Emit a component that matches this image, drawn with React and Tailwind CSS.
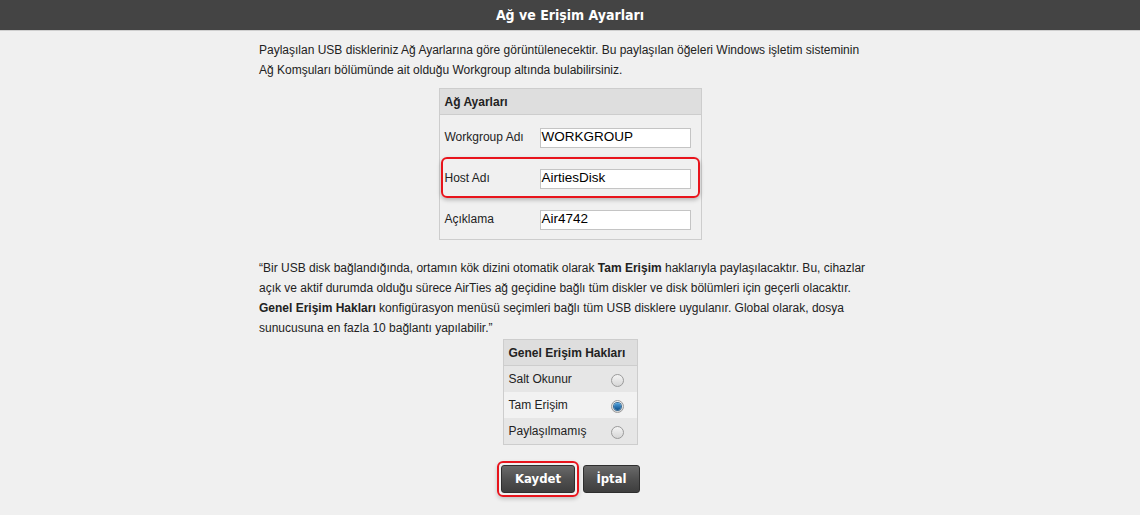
const fields = [
  { label: "Workgroup Adı", value: "WORKGROUP" },
  { label: "Host Adı", value: "AirtiesDisk", marked: true },
  { label: "Açıklama", value: "Air4742" },
];

const rights = [
  { label: "Salt Okunur", checked: false },
  { label: "Tam Erişim", checked: true },
  { label: "Paylaşılmamış", checked: false },
];

function Radio({ checked }) {
  return (
    <span className="flex h-[13px] w-[13px] items-center justify-center rounded-full border border-[#9a9a9a] bg-gradient-to-b from-[#f4f4f4] to-[#d6d6d6]">
      {checked && (
        <span className="h-[7px] w-[7px] rounded-full bg-gradient-to-b from-[#4fa3e0] to-[#0b4f8a] shadow-[0_0_0_1px_#3a6d96]" />
      )}
    </span>
  );
}

export default function App() {
  return (
    <div className="min-h-[515px] bg-[#f0f0f0] font-['Liberation_Sans',Arial,sans-serif] text-[12px] text-[#222]">
      <div className="flex h-[31px] items-center justify-center border-b border-[#cfcfcf] bg-[#444444]">
        <h1 className="font-['DejaVu_Sans_Condensed','DejaVu_Sans',sans-serif] text-[14px] font-bold text-white">
          Ağ ve Erişim Ayarları
        </h1>
      </div>

      <div className="mx-auto w-[622px] pt-[9px]">
        <p className="leading-[20px]">
          Paylaşılan USB diskleriniz Ağ Ayarlarına göre görüntülenecektir. Bu paylaşılan öğeleri Windows işletim sisteminin
          <br />
          Ağ Komşuları bölümünde ait olduğu Workgroup altında bulabilirsiniz.
        </p>

        <div className="mx-auto mt-[8px] w-[263px] border border-[#cdcdcd]">
          <div className="flex h-[26px] items-center border-b border-[#cdcdcd] bg-[#dedede] px-[5px] font-bold">
            Ağ Ayarları
          </div>
          <div className="flex flex-col px-[1px] pt-[1px]">
            {fields.map((f) => (
              <div
                key={f.label}
                className={
                  f.marked
                    ? "flex h-[41px] items-center rounded-[6px] border-2 border-[#e8141c] pl-[2px] shadow-[0_2px_4px_rgba(0,0,0,0.25)]"
                    : "flex h-[41px] items-center pl-[4px]"
                }
              >
                <span className="w-[95px]">{f.label}</span>
                <div className="flex h-[20px] w-[151px] translate-y-[1px] items-center border border-[#c4c4c4] bg-white px-[1px] text-[13.5px] text-black">
                  {f.value}
                </div>
              </div>
            ))}
          </div>
        </div>

        <p className="mt-[18px] leading-[20px]">
          “Bir USB disk bağlandığında, ortamın kök dizini otomatik olarak <b>Tam Erişim</b> haklarıyla paylaşılacaktır. Bu, cihazlar
          <br />
          açık ve aktif durumda olduğu sürece AirTies ağ geçidine bağlı tüm diskler ve disk bölümleri için geçerli olacaktır.
          <br />
          <b>Genel Erişim Hakları</b> konfigürasyon menüsü seçimleri bağlı tüm USB disklere uygulanır. Global olarak, dosya
          <br />
          sunucusuna en fazla 10 bağlantı yapılabilir.”
        </p>

        <div className="mx-auto mt-[1px] w-[135px] border border-[#cdcdcd]">
          <div className="flex h-[26px] items-center border-b border-[#cdcdcd] bg-[#dedede] px-[5px] font-bold">
            Genel Erişim Hakları
          </div>
          {rights.map((r) => (
            <div
              key={r.label}
              className={
                r.checked
                  ? "flex h-[26px] items-center justify-between bg-[#f2f2f2] pl-[5px] pr-[13px]"
                  : "flex h-[26px] items-center justify-between bg-[#e6e6e6] pl-[5px] pr-[13px]"
              }
            >
              <span>{r.label}</span>
              <span className="translate-y-[1px]">
                <Radio checked={r.checked} />
              </span>
            </div>
          ))}
        </div>

        <div className="mt-[16px] flex justify-center gap-[4px] pr-[3px]">
          <div className="rounded-[6px] border-2 border-[#e8141c] p-[2px] shadow-[0_2px_4px_rgba(0,0,0,0.2)]">
            <button className="h-[28px] w-[74px] rounded-[3px] border border-[#2e2e2e] bg-gradient-to-b from-[#6a6a6a] via-[#505050] to-[#3e3e3e] font-['DejaVu_Sans_Condensed','DejaVu_Sans',sans-serif] text-[13px] font-bold text-white">
              Kaydet
            </button>
          </div>
          <div className="pt-[4px]">
            <button className="h-[28px] w-[57px] rounded-[3px] border border-[#2e2e2e] bg-gradient-to-b from-[#6a6a6a] via-[#505050] to-[#3e3e3e] font-['DejaVu_Sans_Condensed','DejaVu_Sans',sans-serif] text-[13px] font-bold text-white">
              İptal
            </button>
          </div>
        </div>
      </div>
    </div>
  );
}
